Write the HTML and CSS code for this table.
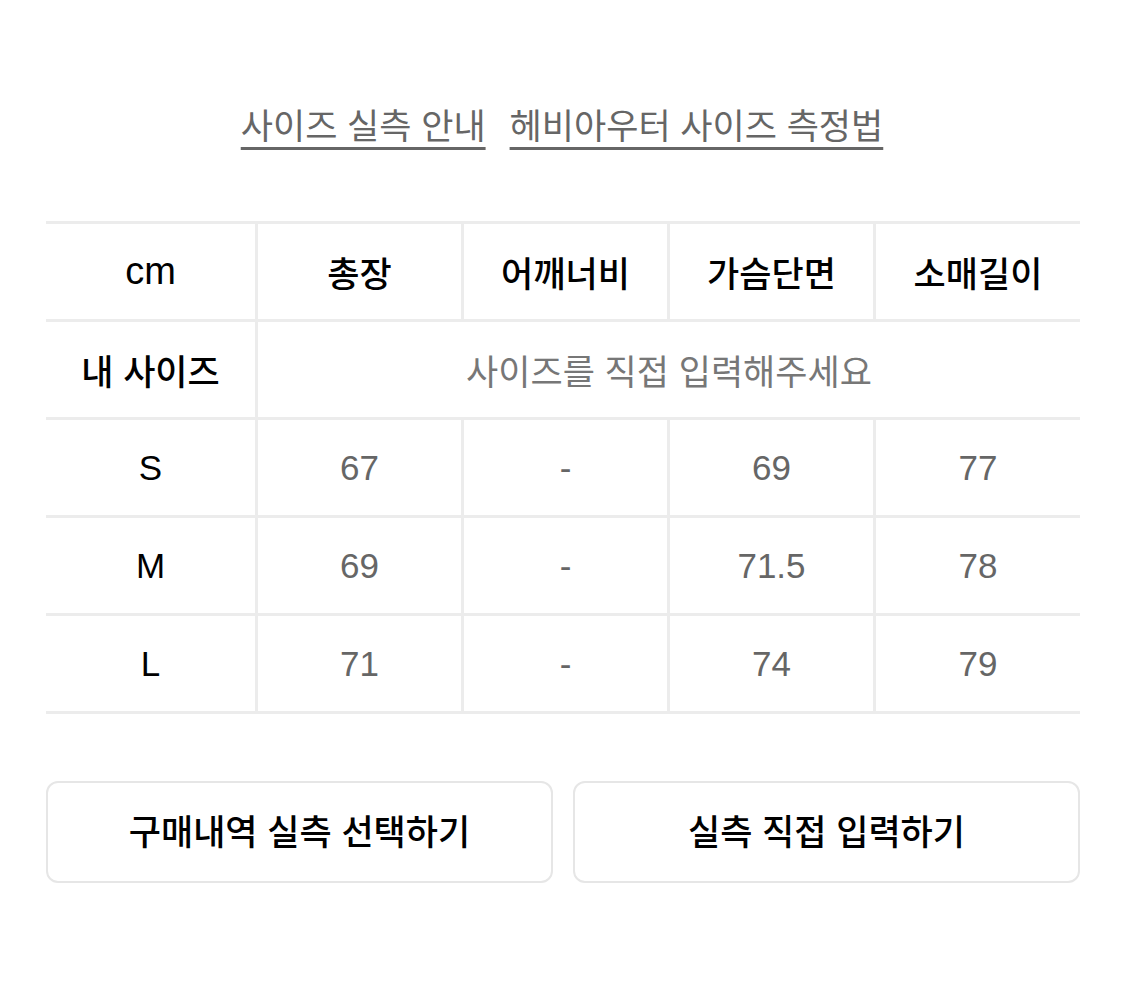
FILE: index.html
```html
<!DOCTYPE html>
<html lang="ko">
<head>
<meta charset="utf-8">
<title>사이즈 실측 안내</title>
<link rel="stylesheet" href="styles.css">
</head>
<body>
<div class="page">
  <nav class="links">
    <a class="link" href="#">사이즈 실측 안내</a>
    <a class="link" href="#">헤비아우터 사이즈 측정법</a>
  </nav>

  <div class="size-table">
    <div class="cell head first unit">cm</div>
    <div class="cell head">총장</div>
    <div class="cell head">어깨너비</div>
    <div class="cell head">가슴단면</div>
    <div class="cell head last">소매길이</div>

    <div class="cell head first">내 사이즈</div>
    <div class="cell span muted last">사이즈를 직접 입력해주세요</div>

    <div class="cell head first latin">S</div>
    <div class="cell val">67</div>
    <div class="cell val">-</div>
    <div class="cell val">69</div>
    <div class="cell val last">77</div>

    <div class="cell head first latin">M</div>
    <div class="cell val">69</div>
    <div class="cell val">-</div>
    <div class="cell val">71.5</div>
    <div class="cell val last">78</div>

    <div class="cell head first latin">L</div>
    <div class="cell val">71</div>
    <div class="cell val">-</div>
    <div class="cell val">74</div>
    <div class="cell val last">79</div>
  </div>

  <div class="actions">
    <button class="btn" type="button">구매내역 실측 선택하기</button>
    <button class="btn" type="button">실측 직접 입력하기</button>
  </div>
</div>
</body>
</html>
```

FILE: styles.css
```css
* { box-sizing: border-box; }

html, body {
  margin: 0;
  padding: 0;
  background: #ffffff;
}

body {
  font-family: "Liberation Sans", "Noto Sans CJK KR", sans-serif;
  color: #111111;
}

.page {
  width: 1125px;
  padding: 104px 45px 0 46px;
}

.links {
  display: flex;
  justify-content: center;
  gap: 24px;
  height: 46px;
  line-height: 46px;
  font-size: 35px;
  padding-right: 2px;
}

.link {
  color: #666666;
  text-decoration: underline;
  text-decoration-thickness: 3px;
  text-underline-offset: 8px;
  text-decoration-color: #666666;
}

.size-table {
  margin-top: 71px;
  display: grid;
  grid-template-columns: 212px 206px 206px 206px 204px;
  grid-auto-rows: 98px;
  border-top: 3px solid #ececec;
}

.cell {
  display: flex;
  align-items: center;
  justify-content: center;
  font-size: 35px;
  border-right: 3px solid #ececec;
  border-bottom: 3px solid #ececec;
}

.cell.last { border-right: none; }

.head {
  color: #000000;
  font-weight: 500;
}

.unit { font-size: 38px; }

.val { color: #666666; }

.muted { color: #777777; }

.span { grid-column: 2 / 6; }

.actions {
  margin-top: 67px;
  display: flex;
  gap: 20px;
}

.btn {
  flex: 1;
  height: 102px;
  background: #ffffff;
  border: 2px solid #e6e6e6;
  border-radius: 12px;
  font-family: "Liberation Sans", "Noto Sans CJK KR", sans-serif;
  font-size: 35px;
  font-weight: 500;
  color: #000000;
  padding: 0 0 6px;
}
```
